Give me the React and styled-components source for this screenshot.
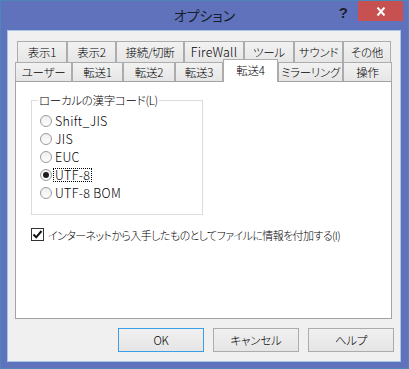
import styled, { createGlobalStyle } from "styled-components";

const GlobalStyle = createGlobalStyle`
  html, body {
    margin: 0;
    padding: 0;
    background: #6072bb;
  }
`;

const topTabs = [
  { label: "表示1", w: 50 },
  { label: "表示2", w: 49 },
  { label: "接続/切断", w: 68 },
  { label: "FireWall", w: 60, latin: true },
  { label: "ツール", w: 50 },
  { label: "サウンド", w: 49 },
  { label: "その他", w: 48 },
];

const bottomTabs = [
  { label: "ユーザー", w: 57 },
  { label: "転送1", w: 51 },
  { label: "転送2", w: 52 },
  { label: "転送3", w: 48 },
  { label: "転送4", w: 55, active: true },
  { label: "ミラーリング", w: 65 },
  { label: "操作", w: 49 },
];

const codes = ["Shift_JIS", "JIS", "EUC", "UTF-8", "UTF-8 BOM"];

const Frame = styled.div`
  width: 409px;
  height: 369px;
  box-sizing: border-box;
  border: 1px solid #4b88b9;
  background: #6072bb;
  display: flex;
  flex-direction: column;
  font-family: "Noto Sans CJK JP", "Liberation Sans", sans-serif;
  font-size: 12px;
  font-weight: 300;
  color: #000;
  font-feature-settings: "palt";
`;

const TitleBar = styled.div`
  height: 29px;
  flex-shrink: 0;
  display: grid;
  grid-template-columns: 1fr auto 1fr;
`;

const Title = styled.div`
  grid-column: 2;
  font-size: 14px;
  font-weight: 400;
  line-height: 29px;
  color: #15202c;
`;

const Caption = styled.div`
  grid-column: 3;
  justify-self: end;
  display: flex;
  align-items: flex-start;
  margin-right: 5px;
`;

const HelpMark = styled.div`
  font: bold 15px "Liberation Sans", sans-serif;
  color: #1e1e28;
  margin: 3px 10px 0 0;
`;

const CloseButton = styled.div`
  width: 45px;
  height: 20px;
  background: #c75050;
  display: flex;
  align-items: center;
  justify-content: center;
`;

const Client = styled.div`
  flex: 1;
  margin: 0 7px 6px 6px;
  border: 1px solid #a8c6e6;
  background: #f0f0f0;
  padding: 10px 8px 0 7px;
  display: flex;
  flex-direction: column;
`;

const TabRow = styled.div`
  display: flex;
  align-items: flex-end;
  height: ${(p) => p.$h}px;
  padding-left: ${(p) => p.$indent}px;
`;

const Tab = styled.div`
  width: ${(p) => p.$w}px;
  height: ${(p) => (p.$active ? "23px" : "100%")};
  box-sizing: border-box;
  border: 1px solid #acacac;
  border-bottom: none;
  background: ${(p) =>
    p.$active ? "#fff" : "linear-gradient(#f2f2f2, #e6e6e6)"};
  display: flex;
  align-items: center;
  justify-content: center;
  padding-bottom: ${(p) => (p.$active ? "3px" : "0")};
  margin-bottom: ${(p) => (p.$active ? "-1px" : "0")};
  position: ${(p) => (p.$active ? "relative" : "static")};
  z-index: ${(p) => (p.$active ? 1 : "auto")};
  font-size: ${(p) => (p.$latin ? "12.5px" : "11.5px")};
  letter-spacing: ${(p) => (p.$latin ? "0.2px" : "-0.3px")};
  line-height: 14px;
  white-space: nowrap;
`;

const Panel = styled.div`
  height: 238px;
  box-sizing: border-box;
  border: 1px solid #a3a3a3;
  background: #fff;
  padding: 11px 0 0 15px;
`;

const Group = styled.fieldset`
  width: 172px;
  box-sizing: border-box;
  margin: 0;
  padding: 0 0 12px 8px;
  border: 1px solid #dcdcdc;
`;

const Legend = styled.legend`
  padding: 0 1px;
  margin-left: -2px;
  line-height: 14px;
  font-size: 11.5px;
  letter-spacing: -0.3px;
`;

const OptionList = styled.div`
  padding-top: 5px;
  display: flex;
  flex-direction: column;
`;

const Option = styled.label`
  display: flex;
  align-items: center;
  height: 18px;
  gap: 1px;
`;

const Radio = styled.span`
  width: 12px;
  height: 12px;
  box-sizing: border-box;
  border-radius: 50%;
  border: 1px solid #9a9a9a;
  background: linear-gradient(#efefef, #fdfdfd);
  display: flex;
  align-items: center;
  justify-content: center;

  &::after {
    content: "";
    width: 6px;
    height: 6px;
    border-radius: 50%;
    background: #1c1c1c;
    display: ${(p) => (p.$checked ? "block" : "none")};
  }
`;

const OptionText = styled.span`
  font-size: 12.5px;
  letter-spacing: 0.3px;
  line-height: 12px;
  padding: 0 1px;
  border: 1px dotted ${(p) => (p.$focus ? "#000" : "transparent")};
`;

const CheckRow = styled.label`
  display: flex;
  align-items: center;
  gap: 4px;
  margin: 13px 0 0 0;
  height: 13px;
  font-size: 11px;
  letter-spacing: -0.6px;
  white-space: nowrap;
`;

const CheckBox = styled.span`
  width: 13px;
  height: 13px;
  box-sizing: border-box;
  border: 1px solid #333;
  background: #fff;
  display: flex;
  align-items: center;
  justify-content: center;
`;

const ButtonRow = styled.div`
  display: flex;
  justify-content: flex-end;
  gap: 9px;
  margin: 9px -2px 0 0;
`;

const Button = styled.div`
  width: 86px;
  height: 24px;
  box-sizing: border-box;
  border: 1px solid ${(p) => (p.$primary ? "#3c9ee8" : "#acacac")};
  background: linear-gradient(#f0f0f0, #e5e5e5);
  display: flex;
  align-items: center;
  justify-content: center;
  font-size: 11.5px;
  letter-spacing: -0.2px;
`;

export default function App() {
  return (
    <>
      <GlobalStyle />
      <Frame>
        <TitleBar>
          <Title>オプション</Title>
          <Caption>
            <HelpMark>?</HelpMark>
            <CloseButton>
              <svg width="10" height="9" viewBox="0 0 10 9">
                <path d="M1.5 0.5 L8.5 8.5 M8.5 0.5 L1.5 8.5" stroke="#fff" strokeWidth="2" />
              </svg>
            </CloseButton>
          </Caption>
        </TitleBar>
        <Client>
          <TabRow $h={21} $indent={2}>
            {topTabs.map((t) => (
              <Tab key={t.label} $w={t.w} $latin={t.latin}>{t.label}</Tab>
            ))}
          </TabRow>
          <TabRow $h={19} $indent={0}>
            {bottomTabs.map((t) => (
              <Tab key={t.label} $w={t.w} $active={t.active}>{t.label}</Tab>
            ))}
          </TabRow>
          <Panel>
            <Group>
              <Legend>ローカルの漢字コード(L)</Legend>
              <OptionList>
                {codes.map((c) => (
                  <Option key={c}>
                    <Radio $checked={c === "UTF-8"} />
                    <OptionText $focus={c === "UTF-8"}>{c}</OptionText>
                  </Option>
                ))}
              </OptionList>
            </Group>
            <CheckRow>
              <CheckBox>
                <svg width="11" height="11" viewBox="0 0 11 11">
                  <path d="M1.5 5.5 L4.2 8.3 L9.5 2" fill="none" stroke="#111" strokeWidth="2" />
                </svg>
              </CheckBox>
              インターネットから入手したものとしてファイルに情報を付加する(I)
            </CheckRow>
          </Panel>
          <ButtonRow>
            <Button $primary>OK</Button>
            <Button>キャンセル</Button>
            <Button>ヘルプ</Button>
          </ButtonRow>
        </Client>
      </Frame>
    </>
  );
}
